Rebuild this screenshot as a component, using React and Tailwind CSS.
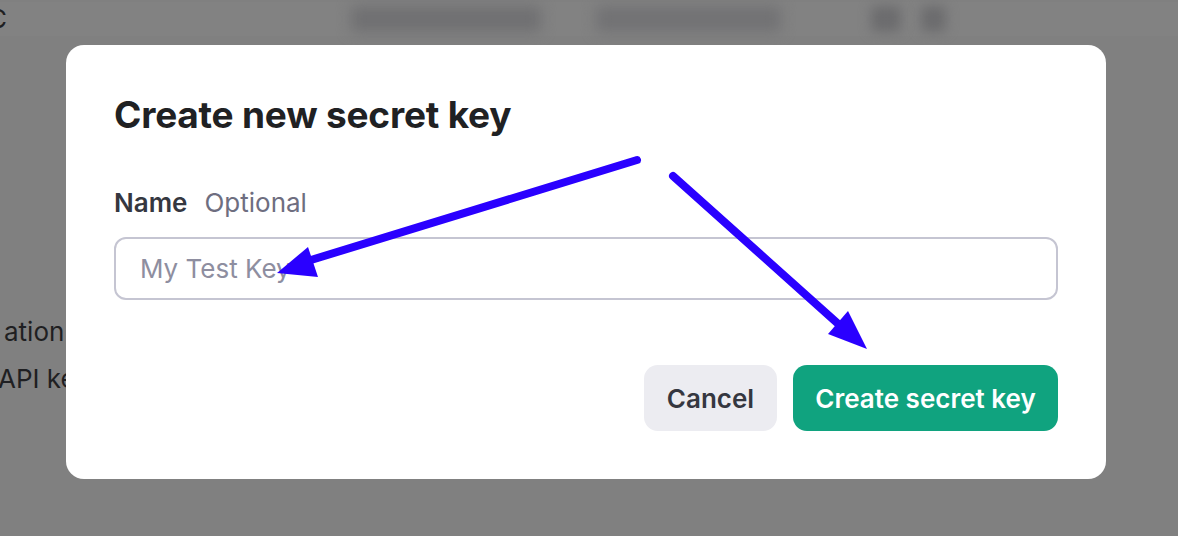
import React from 'react';

function Arrows() {
  return (
    <svg className="absolute inset-0 pointer-events-none" width="1178" height="536" viewBox="0 0 1178 536">
      <line x1="637" y1="160" x2="298" y2="264" stroke="#2a00ff" strokeWidth="8" strokeLinecap="round" />
      <polygon points="277,273 308,247 318,277" fill="#2a00ff" />
      <line x1="673" y1="176" x2="845" y2="330" stroke="#2a00ff" strokeWidth="8" strokeLinecap="round" />
      <polygon points="867,349 848,311 828,334" fill="#2a00ff" />
    </svg>
  );
}

export default function App() {
  return (
    <div className="relative w-[1178px] h-[536px] overflow-hidden bg-[#808080] font-['Inter',sans-serif]">
      {/* page behind the overlay */}
      <div className="flex items-center h-[34px] mt-[2px] bg-[#828282]">
        <span className="ml-[-12px] text-[26px] text-[#1f1f22] leading-none">C</span>
        <div className="ml-[344px] w-[190px] h-[26px] rounded bg-[#707072] blur-[7px]" />
        <div className="ml-[55px] w-[185px] h-[26px] rounded bg-[#727274] blur-[7px]" />
        <div className="ml-[90px] w-[30px] h-[26px] rounded bg-[#6c6c6e] blur-[6px]" />
        <div className="ml-[20px] w-[25px] h-[26px] rounded bg-[#6c6c6e] blur-[6px]" />
      </div>
      <div className="mt-[280px] flex flex-col gap-[15px] text-[26px] leading-[32px] text-[#1f1f22]">
        <span className="ml-[4px]">ation</span>
        <span className="ml-[-2px]">API keys</span>
      </div>

      {/* modal */}
      <div className="absolute left-[66px] top-[45px] w-[1040px] rounded-[18px] bg-white p-12 flex flex-col">
        <h2 className="text-[37px] leading-[44px] font-bold text-[#202123] tracking-[-0.2px]">Create new secret key</h2>
        <div className="mt-[50px] flex items-baseline gap-[17px] text-[26px] leading-[32px]">
          <span className="font-semibold text-[#353740]">Name</span>
          <span className="text-[#6e6e80]">Optional</span>
        </div>
        <input
          className="mt-[18px] h-[63px] w-full rounded-[12px] border-2 border-[#c5c5d2] px-[24px] text-[26px] text-[#353740] placeholder-[#8e8ea0] outline-none"
          placeholder="My Test Key"
        />
        <div className="mt-[65px] flex justify-end gap-4">
          <button className="h-[66px] w-[133px] rounded-[14px] bg-[#ececf1] text-[26px] font-semibold text-[#353740]">Cancel</button>
          <button className="h-[66px] w-[265px] rounded-[14px] bg-[#10a37f] text-[26px] font-semibold text-white">Create secret key</button>
        </div>
      </div>

      <Arrows />
    </div>
  );
}
